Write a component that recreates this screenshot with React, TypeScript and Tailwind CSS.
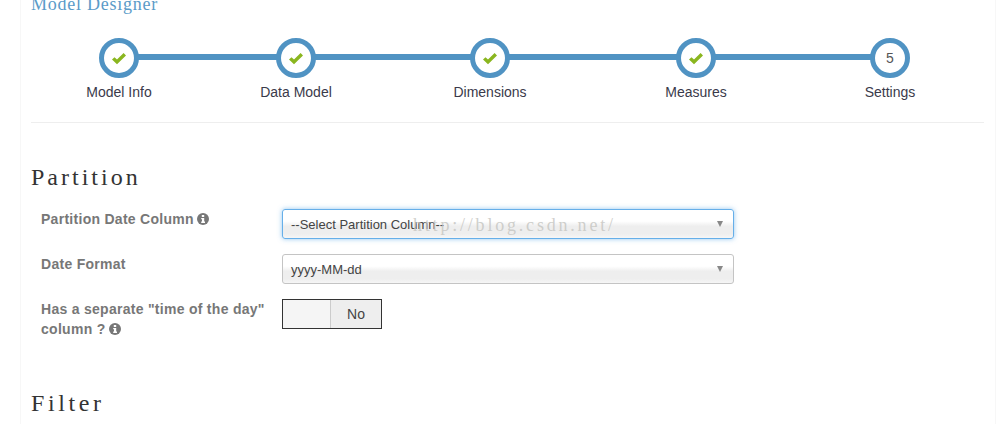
const sans = "font-['Liberation_Sans',Arial,sans-serif]";
const serif = "font-['Liberation_Serif',serif]";

function Check() {
  return (
    <svg width="16" height="13" viewBox="0 0 16 13">
      <path d="M1 7.5 L3.5 5.2 L6 7.6 L12.6 1 L15 3.4 L6 12.3 Z" fill="#8ab61f" />
    </svg>
  );
}

function Step({ label, className, n }: { label: string; className: string; n?: number }) {
  return (
    <div className={`w-[100px] flex flex-col items-center ${className}`}>
      <div className="relative z-10 w-[40px] h-[40px] rounded-full border-[5px] border-[#5093c3] bg-white flex items-center justify-center text-[14px] text-[#555]">
        {n ?? <Check />}
      </div>
      <div className="mt-[4px] text-[14px] leading-[20px] text-[#3a3a4a]">{label}</div>
    </div>
  );
}

function Info() {
  return (
    <svg className="inline-block align-[-1px] ml-[-1px]" width="12" height="12" viewBox="0 0 12 12">
      <circle cx="6" cy="6" r="6" fill="#777" />
      <rect x="4.8" y="2" width="2.4" height="2" fill="#fff" />
      <path d="M4.2 5 H7.2 V8.6 H8 V10 H4.2 V8.6 H5 V6.3 H4.2 Z" fill="#fff" />
    </svg>
  );
}

function Select({ text, focused }: { text: string; focused?: boolean }) {
  return (
    <div
      className={`w-[452px] h-[30px] rounded-[3px] border flex items-center justify-between pl-[8px] pr-[10px] text-[13px] text-[#444] bg-[linear-gradient(#ffffff_0%,#ffffff_40%,#eeeeee_58%,#eeeeee_85%,#f6f6f6_100%)] ${
        focused ? "border-[#66afe9] shadow-[0_0_5px_rgba(102,175,233,0.7)]" : "border-[#c4c4c4]"
      }`}
    >
      <span className="pt-[1px]">{text}</span>
      <span className="w-0 h-0 border-x-[3.5px] border-x-transparent border-t-[6px] border-t-[#888]" />
    </div>
  );
}

function Row({ label, children, className }: { label: React.ReactNode; children: React.ReactNode; className: string }) {
  return (
    <div className={`flex ${className}`}>
      <div className="w-[251px] pl-[10px] pr-[4px] text-[14px] tracking-[0.28px] leading-[20px] font-bold text-[#777]">{label}</div>
      {children}
    </div>
  );
}

export default function App() {
  return (
    <div className={`relative w-[1002px] h-[429px] overflow-hidden bg-white ${sans}`}>
      <div className="ml-[20px] w-[976px] h-[429px] border-x border-[#f7f7f7] pl-[10px] pr-[11px]">
        <div className={`${serif} text-[18px] leading-[18px] tracking-[0.75px] text-[#5b9bc8] mt-[-5px]`}>Model Designer</div>
        <div className="relative flex mt-[25px] h-[80px]">
          <div className="absolute left-[88px] top-[16px] w-[771px] h-[6px] bg-[#5093c3]" />
          <Step label="Model Info" className="ml-[38px]" />
          <Step label="Data Model" className="ml-[77px]" />
          <Step label="Dimensions" className="ml-[94px]" />
          <Step label="Measures" className="ml-[106px]" />
          <Step label="Settings" n={5} className="ml-[94px]" />
        </div>
        <div className="mt-[4px] border-t border-[#eeeeee]" />
        <div className={`${serif} text-[24px] leading-[28px] tracking-[3px] text-[#333] mt-[40px]`}>Partition</div>
        <Row className="mt-[18px]" label={<>Partition Date Column <Info /></>}>
          <Select text="--Select Partition Column--" focused />
        </Row>
        <Row className="mt-[15px]" label="Date Format">
          <Select text="yyyy-MM-dd" />
        </Row>
        <Row className="mt-[15px]" label={<>Has a separate "time of the day" column ? <Info /></>}>
          <div className="w-[100px] h-[30px] border border-[#333] flex text-[14px] text-[#444]">
            <div className="w-[48px] bg-[#f5f5f5] border-r border-[#ccc]" />
            <div className="flex-1 bg-[#eeeeee] flex items-center justify-center">No</div>
          </div>
        </Row>
        <div className={`${serif} text-[24px] leading-[28px] tracking-[3.6px] text-[#333] mt-[50px]`}>Filter</div>
      </div>
      <div className={`absolute left-[413px] top-[215px] ${serif} text-[18px] leading-[20px] tracking-[2.8px] text-[#c4c4c0]/80`}>http://blog.csdn.net/</div>
    </div>
  );
}
